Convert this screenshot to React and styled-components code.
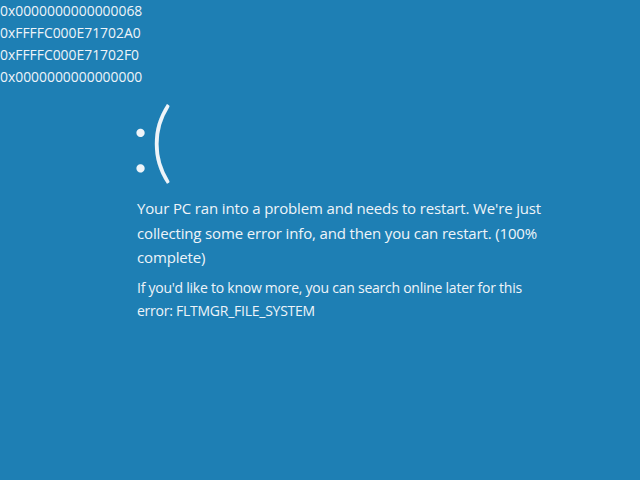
import React from 'react';
import styled, { createGlobalStyle } from 'styled-components';

const GlobalStyle = createGlobalStyle`
  html, body {
    margin: 0;
    padding: 0;
    background: #1e7fb4;
  }
`;

const params = [
  '0x0000000000000068',
  '0xFFFFC000E71702A0',
  '0xFFFFC000E71702F0',
  '0x0000000000000000',
];

export default function App() {
  return (
    <Screen>
      <GlobalStyle />
      <Params>
        {params.map(p => (
          <Param key={p}>{p}</Param>
        ))}
      </Params>
      <Body>
        <Face>:(</Face>
        <Message>
          Your PC ran into a problem and needs to restart. We're just
          collecting some error info, and then you can restart. (100%
          complete)
        </Message>
        <Detail>
          If you'd like to know more, you can search online later for this
          error: FLTMGR_FILE_SYSTEM
        </Detail>
      </Body>
    </Screen>
  );
}

const Screen = styled.div`
  width: 640px;
  height: 480px;
  overflow: hidden;
  background: #1e7fb4;
  color: #eef4f9;
  font-family: "Open Sans", "Noto Sans", sans-serif;
`;

const Params = styled.div`
  display: flex;
  flex-direction: column;
`;

const Param = styled.div`
  font-size: 13.9px;
  line-height: 22px;
  height: 22px;
`;

const Body = styled.div`
  padding-left: 137px;
  width: 410px;
`;

const Face = styled.div`
  font-family: "Lato", "Open Sans", sans-serif;
  font-size: 88px;
  font-weight: 300;
  line-height: 90px;
  height: 90px;
  margin-top: 5px;
  margin-left: -7px;
  letter-spacing: -1px;
`;

const Message = styled.p`
  margin: 13px 0 0;
  font-size: 15px;
  line-height: 24.5px;
  letter-spacing: -0.15px;
`;

const Detail = styled.p`
  margin: 6px 0 0;
  font-size: 14px;
  line-height: 23px;
  letter-spacing: -0.25px;
`;
